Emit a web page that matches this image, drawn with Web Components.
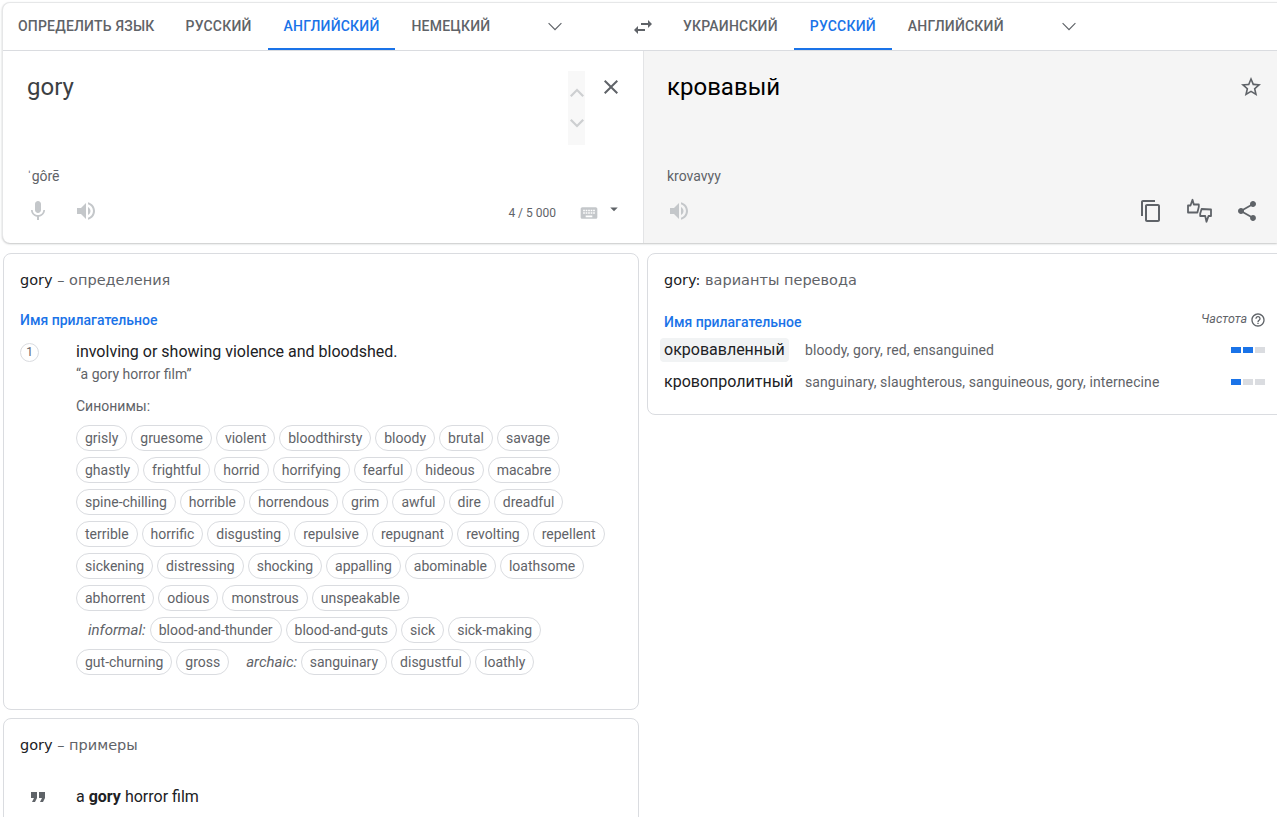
<!DOCTYPE html>
<html lang="ru">
<head>
<meta charset="utf-8">
<title>gory</title>
<style>
  html, body { margin: 0; height: 100%; overflow: hidden; background: #fff; }
  body { font-family: Roboto, "Liberation Sans", sans-serif; color: #3c4043; }
</style>
</head>
<body>
<gt-app></gt-app>

<script>
const ICONS = {
  mic: 'M12 14c1.66 0 2.99-1.34 2.99-3L15 5c0-1.66-1.34-3-3-3S9 3.34 9 5v6c0 1.66 1.34 3 3 3zm5.3-3c0 3-2.54 5.1-5.3 5.1S6.7 14 6.7 11H5c0 3.41 2.72 6.23 6 6.72V21h2v-3.28c3.28-.48 6-3.3 6-6.72h-1.7z',
  volume: 'M3 9v6h4l5 5V4L7 9H3zm13.5 3c0-1.77-1.02-3.29-2.5-4.03v8.05c1.48-.73 2.5-2.25 2.5-4.02zM14 3.23v2.06c2.89.86 5 3.54 5 6.71s-2.11 5.85-5 6.71v2.06c4.01-.91 7-4.49 7-8.77s-2.99-7.86-7-8.77z',
  close: 'M19 6.41L17.59 5 12 10.59 6.41 5 5 6.41 10.59 12 5 17.59 6.41 19 12 13.41 17.59 19 19 17.59 13.41 12z',
  swap: 'M6.99 11L3 15l3.99 4v-3H14v-2H6.99v-3zM21 9l-3.99-4v3H10v2h7.01v3L21 9z',
  copy: 'M16 1H4c-1.1 0-2 .9-2 2v14h2V3h12V1zm3 4H8c-1.1 0-2 .9-2 2v14c0 1.1.9 2 2 2h11c1.1 0 2-.9 2-2V7c0-1.1-.9-2-2-2zm0 16H8V7h11v14z',
  share: 'M18 16.08c-.76 0-1.44.3-1.96.77L8.91 12.7c.05-.23.09-.46.09-.7s-.04-.47-.09-.7l7.05-4.11c.54.5 1.25.81 2.04.81 1.66 0 3-1.34 3-3s-1.34-3-3-3-3 1.34-3 3c0 .24.04.47.09.7L8.04 9.81C7.5 9.31 6.79 9 6 9c-1.66 0-3 1.34-3 3s1.34 3 3 3c.79 0 1.5-.31 2.04-.81l7.12 4.16c-.05.21-.08.43-.08.65 0 1.61 1.31 2.92 2.92 2.92s2.92-1.31 2.92-2.92-1.31-2.92-2.92-2.92z',
  star: 'M22 9.24l-7.19-.62L12 2 9.19 8.63 2 9.24l5.46 4.73L5.82 21 12 17.27 18.18 21l-1.63-7.03L22 9.24zM12 15.4l-3.76 2.27 1-4.28-3.32-2.88 4.38-.38L12 6.1l1.71 4.04 4.38.38-3.32 2.88 1 4.28L12 15.4z',
  help: 'M11 18h2v-2h-2v2zm1-16C6.48 2 2 6.48 2 12s4.48 10 10 10 10-4.48 10-10S17.52 2 12 2zm0 18c-4.41 0-8-3.59-8-8s3.59-8 8-8 8 3.59 8 8-3.59 8-8 8zm0-14c-2.21 0-4 1.79-4 4h2c0-1.1.9-2 2-2s2 .9 2 2c0 2-3 1.75-3 5h2c0-2.25 3-2.5 3-5 0-2.21-1.79-4-4-4z',
  keyboard: 'M20 5H4c-1.1 0-1.99.9-1.99 2L2 17c0 1.1.9 2 2 2h16c1.1 0 2-.9 2-2V7c0-1.1-.9-2-2-2zm-9 3h2v2h-2V8zm0 3h2v2h-2v-2zM8 8h2v2H8V8zm0 3h2v2H8v-2zm-1 2H5v-2h2v2zm0-3H5V8h2v2zm9 7H8v-2h8v2zm0-4h-2v-2h2v2zm0-3h-2V8h2v2zm3 3h-2v-2h2v2zm0-3h-2V8h2v2z',
  dropdown: 'M7 10l5 5 5-5z',
  quote: 'M6 17h3l2-4V7H5v6h3zm8 0h3l2-4V7h-6v6h3z',
  chevdown: 'M5.2 8.6L12 15.4l6.8-6.8L18 7.8l-6 6-6-6z',
  up: 'M5 15.5l7-7 7 7-1.6 1.4L12 11.4l-5.4 5.5z',
  down: 'M5 8.5l7 7 7-7-1.6-1.4L12 12.6 6.6 7.1z',
  feedback: 'M1 13.5V6.5h2.5L5.5.8l1.3 4.7h5v2.4l-1.4 5.6zM24 10.5v6.5h-2.5l-2 5.7-1.3-5.7h-5v-2.4l1.4-4.6z'
};
// drawn as outlines, the rest are filled
const OUTLINED = ['feedback'];

class GtIcon extends HTMLElement {
  connectedCallback() {
    const name = this.getAttribute('name');
    const size = this.getAttribute('size') || 24;
    const root = this.shadowRoot || this.attachShadow({ mode: 'open' });
    root.innerHTML = `
      <style>
        :host { display: inline-flex; flex: none; color: var(--icon, #5f6368); }
        svg { display: block; fill: currentColor; overflow: visible; }
        svg.line { fill: none; stroke: currentColor; stroke-width: 1.8; stroke-linejoin: round; }
      </style>
      <svg class="${OUTLINED.includes(name) ? 'line' : ''}" width="${size}" height="${size}" viewBox="0 0 24 24"><path d="${ICONS[name]}"/></svg>`;
  }
}

class GtTab extends HTMLElement {
  constructor() {
    super();
    this.attachShadow({ mode: 'open' }).innerHTML = `
      <style>
        :host {
          display: flex; align-items: center; box-sizing: border-box; height: 47px;
          padding: 0 16px; border-bottom: 2px solid transparent;
          font: 500 14px/20px Roboto, sans-serif; letter-spacing: .2px; color: #5f6368; white-space: nowrap;
          text-transform: uppercase;
        }
        :host([active]) { color: #1a73e8; border-bottom-color: #1a73e8; }
      </style>
      <slot></slot>`;
  }
}

class GtTabs extends HTMLElement {
  constructor() {
    super();
    this.attachShadow({ mode: 'open' }).innerHTML = `
      <style>
        :host { display: flex; align-items: flex-start; height: 47px; }
      </style>
      <slot></slot>`;
  }
}

class GtPanel extends HTMLElement {
  constructor() {
    super();
    this.attachShadow({ mode: 'open' }).innerHTML = `
      <style>
        :host {
          display: flex; flex-direction: column; box-sizing: border-box; height: 192px;
          padding: 20px 20px 0 24px;
        }
        :host([target]) { background: #f5f5f5; border-left: 1px solid #e3e4e6; padding-left: 23px; padding-right: 18px; }
        .top { display: flex; height: 94px; gap: 14px; }
        .text { flex: 1; font: 400 24px/32px Roboto, sans-serif; color: #3c4043; }
        :host([target]) .text { color: #000; }
        .phon { margin-top: 1px; height: 20px; font: 400 14px/20px Roboto, sans-serif; color: #5f6368; }
        .tools { display: flex; align-items: center; height: 24px; margin-top: 13px; }
      </style>
      <div class="top">
        <div class="text"><slot name="text"></slot></div>
        <slot name="aside"></slot>
      </div>
      <div class="phon"><slot name="phon"></slot></div>
      <div class="tools"><slot name="tools"></slot></div>`;
  }
}

class GtCard extends HTMLElement {
  constructor() {
    super();
    this.attachShadow({ mode: 'open' }).innerHTML = `
      <style>
        :host {
          display: block; box-sizing: border-box; padding: 16px 16px 0;
          border: 1px solid #dadce0; border-radius: 8px; background: #fff;
        }
        .title { font: 400 14.5px/20px "DejaVu Sans", sans-serif; color: #5f6368; }
        ::slotted([slot=word]) { color: #202124; }
      </style>
      <div class="title"><slot name="word"></slot><slot name="title"></slot></div>
      <slot></slot>`;
  }
}

class GtChip extends HTMLElement {
  constructor() {
    super();
    this.attachShadow({ mode: 'open' }).innerHTML = `
      <style>
        :host {
          display: inline-flex; align-items: center; box-sizing: border-box; height: 26px;
          padding: 0 8px; border: 1px solid #dadce0; border-radius: 13px;
          font: 400 14px/20px Roboto, sans-serif; color: #5f6368; white-space: nowrap;
        }
      </style>
      <slot></slot>`;
  }
}

class GtFreq extends HTMLElement {
  connectedCallback() {
    const on = +this.getAttribute('level');
    const bars = [0, 1, 2].map(i => `<i class="${i < on ? 'on' : ''}"></i>`).join('');
    (this.shadowRoot || this.attachShadow({ mode: 'open' })).innerHTML = `
      <style>
        :host { display: flex; gap: 2px; flex: none; }
        i { display: block; width: 10px; height: 6px; background: #dadce0; }
        i.on { background: #1a73e8; }
      </style>${bars}`;
  }
}

class GtTransRow extends HTMLElement {
  constructor() {
    super();
    this.attachShadow({ mode: 'open' }).innerHTML = `
      <style>
        :host { display: flex; align-items: center; height: 32px; }
        .word {
          flex: none; box-sizing: border-box; width: 145px; margin-left: -4px;
          font: 400 16px/24px Roboto, sans-serif; color: #202124; white-space: nowrap;
        }
        .word span { display: inline-block; padding: 0 4px; border-radius: 4px; }
        :host([selected]) .word span { background: #f1f3f4; }
        .syn { flex: 1; font: 400 14px/20px Roboto, sans-serif; letter-spacing: .1px; color: #5f6368; white-space: nowrap; }
      </style>
      <div class="word"><span><slot name="word"></slot></span></div>
      <div class="syn"><slot name="syn"></slot></div>
      <slot name="freq"></slot>`;
  }
}

class GtApp extends HTMLElement {
  constructor() {
    super();
    const chips = list => list.map(w => `<gt-chip>${w}</gt-chip>`).join('');
    this.attachShadow({ mode: 'open' }).innerHTML = `
      <style>
        :host { display: block; width: 1277px; padding: 2px 0 0 2px; box-sizing: border-box; }
        .box {
          border: 1px solid #e6e7e8; border-right: 0; border-bottom: 0; border-radius: 8px 0 0 8px;
          box-shadow: 0 1px 2px rgba(60,64,67,.3); background: #fff; height: 241px; box-sizing: border-box;
        }
        .bar { display: grid; grid-template-columns: 640px 1fr; height: 48px; box-sizing: border-box; border-bottom: 1px solid #dadce0; }
        .bar gt-tab:first-child { margin-left: -1px; padding-right: 15px; }
        .more { margin: 12px 0 0 37px; }
        .pair { display: grid; grid-template-columns: 640px 1fr; }
        .swap { margin: 12px 12px 0 -12px; }
        .scroll {
          display: flex; flex-direction: column; align-items: center; gap: 8px; box-sizing: border-box;
          width: 17px; height: 74px; padding-top: 9px; background: #f8f8f8; --icon: #cdcfd1;
        }
        .lower { display: grid; grid-template-columns: 636px 1fr; gap: 8px; margin: 10px -12px 0 1px; }
        .col { display: flex; flex-direction: column; gap: 8px; }
        .defs { height: 457px; }
        .ex { height: 120px; }
        .pos { font: 500 14px/20px Roboto, sans-serif; color: #1a73e8; }
        .sense { display: grid; grid-template-columns: 56px 1fr; margin-top: 10px; }
        .num {
          box-sizing: border-box; width: 19px; height: 19px; margin-top: 3px;
          border: 1px solid #dadce0; border-radius: 50%;
          font: 400 12px/17px Roboto, sans-serif; color: #5f6368; text-align: center;
        }
        .def { font: 400 16px/24px Roboto, sans-serif; color: #202124; }
        .sample { font: 400 14px/20px Roboto, sans-serif; color: #5f6368; }
        .syn-label { font: 400 14px/20px Roboto, sans-serif; color: #5f6368; margin-top: 12px; }
        .chips { display: flex; flex-wrap: wrap; gap: 6px 4px; margin-top: 9px; width: 540px; }
        .chips + .chips { margin-top: 6px; }
        .reg { font: italic 400 15px/26px Roboto, sans-serif; color: #5f6368; margin: 0 -.5px 0 13px; }
        .reg.first { margin: 0 0 0 12px; }
        .quote { display: grid; grid-template-columns: 56px 1fr; margin-top: 30px; font: 400 16px/24px Roboto, sans-serif; color: #202124; }
        .quote gt-icon { margin-left: 6px; }
        .trans { height: 162px; }
        .inner { width: 601px; }
        .head { display: flex; align-items: flex-start; margin-top: 19px; }
        .head .pos { flex: 1; margin-top: 3px; }
        .freq-label { font: italic 400 12.5px/16px Roboto, sans-serif; color: #5f6368; margin: 2px 3px 0 0; }
        .head gt-icon { margin: 3px -1px 0 0; }
        .rows { margin-top: 2px; }
      </style>
      <div class="box">
        <div class="bar">
          <gt-tabs>
            <gt-tab>Определить язык</gt-tab>
            <gt-tab>Русский</gt-tab>
            <gt-tab active>Английский</gt-tab>
            <gt-tab>Немецкий</gt-tab>
            <gt-icon class="more" name="chevdown"></gt-icon>
          </gt-tabs>
          <gt-tabs>
            <gt-icon class="swap" name="swap"></gt-icon>
            <gt-tab>Украинский</gt-tab>
            <gt-tab active>Русский</gt-tab>
            <gt-tab>Английский</gt-tab>
            <gt-icon class="more" name="chevdown"></gt-icon>
          </gt-tabs>
        </div>
        <div class="pair">
          <gt-panel>
            <span slot="text">gory</span>
            <div slot="aside" class="scroll"><gt-icon name="up"></gt-icon><gt-icon name="down"></gt-icon></div>
            <gt-icon slot="aside" name="close" style="margin-top:4px;height:24px"></gt-icon>
            <span slot="phon">ˈgôrē</span>
            <gt-icon slot="tools" name="mic" style="--icon:#c4c7ca;margin:0 24px 0 -1px"></gt-icon>
            <gt-icon slot="tools" name="volume" style="--icon:#c4c7ca"></gt-icon>
            <span slot="tools" style="flex:1"></span>
            <span slot="tools" style="font:400 12px/16px Roboto,sans-serif;color:#5f6368;margin:3px 23px 0 0">4 / 5 000</span>
            <gt-icon slot="tools" name="keyboard" size="20" style="--icon:#c4c7ca;margin:3px 6px 0 0"></gt-icon>
            <gt-icon slot="tools" name="dropdown" size="18" style="margin:-4px 0 0 0"></gt-icon>
          </gt-panel>
          <gt-panel target>
            <span slot="text">кровавый</span>
            <gt-icon slot="aside" name="star" style="margin:4px -4px 0 0;height:24px"></gt-icon>
            <span slot="phon">krovavyy</span>
            <gt-icon slot="tools" name="volume" style="--icon:#c4c7ca"></gt-icon>
            <span slot="tools" style="flex:1"></span>
            <gt-icon slot="tools" name="copy"></gt-icon>
            <gt-icon slot="tools" name="feedback" style="margin-left:24px"></gt-icon>
            <gt-icon slot="tools" name="share" style="margin-left:24px"></gt-icon>
          </gt-panel>
        </div>
      </div>
      <div class="lower">
        <div class="col">
          <gt-card class="defs">
            <span slot="word">gory</span><span slot="title"> – определения</span>
            <div class="pos" style="margin-top:20px">Имя прилагательное</div>
            <div class="sense">
              <div class="num">1</div>
              <div>
                <div class="def">involving or showing violence and bloodshed.</div>
                <div class="sample">“a gory horror film”</div>
                <div class="syn-label">Синонимы:</div>
                <div class="chips">
                  ${chips(['grisly','gruesome','violent','bloodthirsty','bloody','brutal','savage','ghastly','frightful','horrid','horrifying','fearful','hideous','macabre','spine-chilling','horrible','horrendous','grim','awful','dire','dreadful','terrible','horrific','disgusting','repulsive','repugnant','revolting','repellent','sickening','distressing','shocking','appalling','abominable','loathsome','abhorrent','odious','monstrous','unspeakable'])}
                </div>
                <div class="chips">
                  <span class="reg first">informal:</span>
                  ${chips(['blood-and-thunder','blood-and-guts','sick','sick-making','gut-churning','gross'])}
                  <span class="reg">archaic:</span>
                  ${chips(['sanguinary','disgustful','loathly'])}
                </div>
              </div>
            </div>
          </gt-card>
          <gt-card class="ex">
            <span slot="word">gory</span><span slot="title"> – примеры</span>
            <div class="quote">
              <gt-icon name="quote"></gt-icon>
              <div>a <b>gory</b> horror film</div>
            </div>
          </gt-card>
        </div>
        <div class="col">
          <gt-card class="trans">
            <span slot="word">gory:</span><span slot="title"> варианты перевода</span>
            <div class="inner">
              <div class="head">
                <div class="pos">Имя прилагательное</div>
                <span class="freq-label">Частота</span>
                <gt-icon name="help" size="16"></gt-icon>
              </div>
              <div class="rows">
                <gt-trans-row selected>
                  <span slot="word">окровавленный</span>
                  <span slot="syn">bloody, gory, red, ensanguined</span>
                  <gt-freq slot="freq" level="2"></gt-freq>
                </gt-trans-row>
                <gt-trans-row>
                  <span slot="word">кровопролитный</span>
                  <span slot="syn">sanguinary, slaughterous, sanguineous, gory, internecine</span>
                  <gt-freq slot="freq" level="1"></gt-freq>
                </gt-trans-row>
              </div>
            </div>
          </gt-card>
        </div>
      </div>`;
  }
}

customElements.define('gt-icon', GtIcon);
customElements.define('gt-tab', GtTab);
customElements.define('gt-tabs', GtTabs);
customElements.define('gt-panel', GtPanel);
customElements.define('gt-card', GtCard);
customElements.define('gt-chip', GtChip);
customElements.define('gt-freq', GtFreq);
customElements.define('gt-trans-row', GtTransRow);
customElements.define('gt-app', GtApp);
</script>
</body>
</html>
